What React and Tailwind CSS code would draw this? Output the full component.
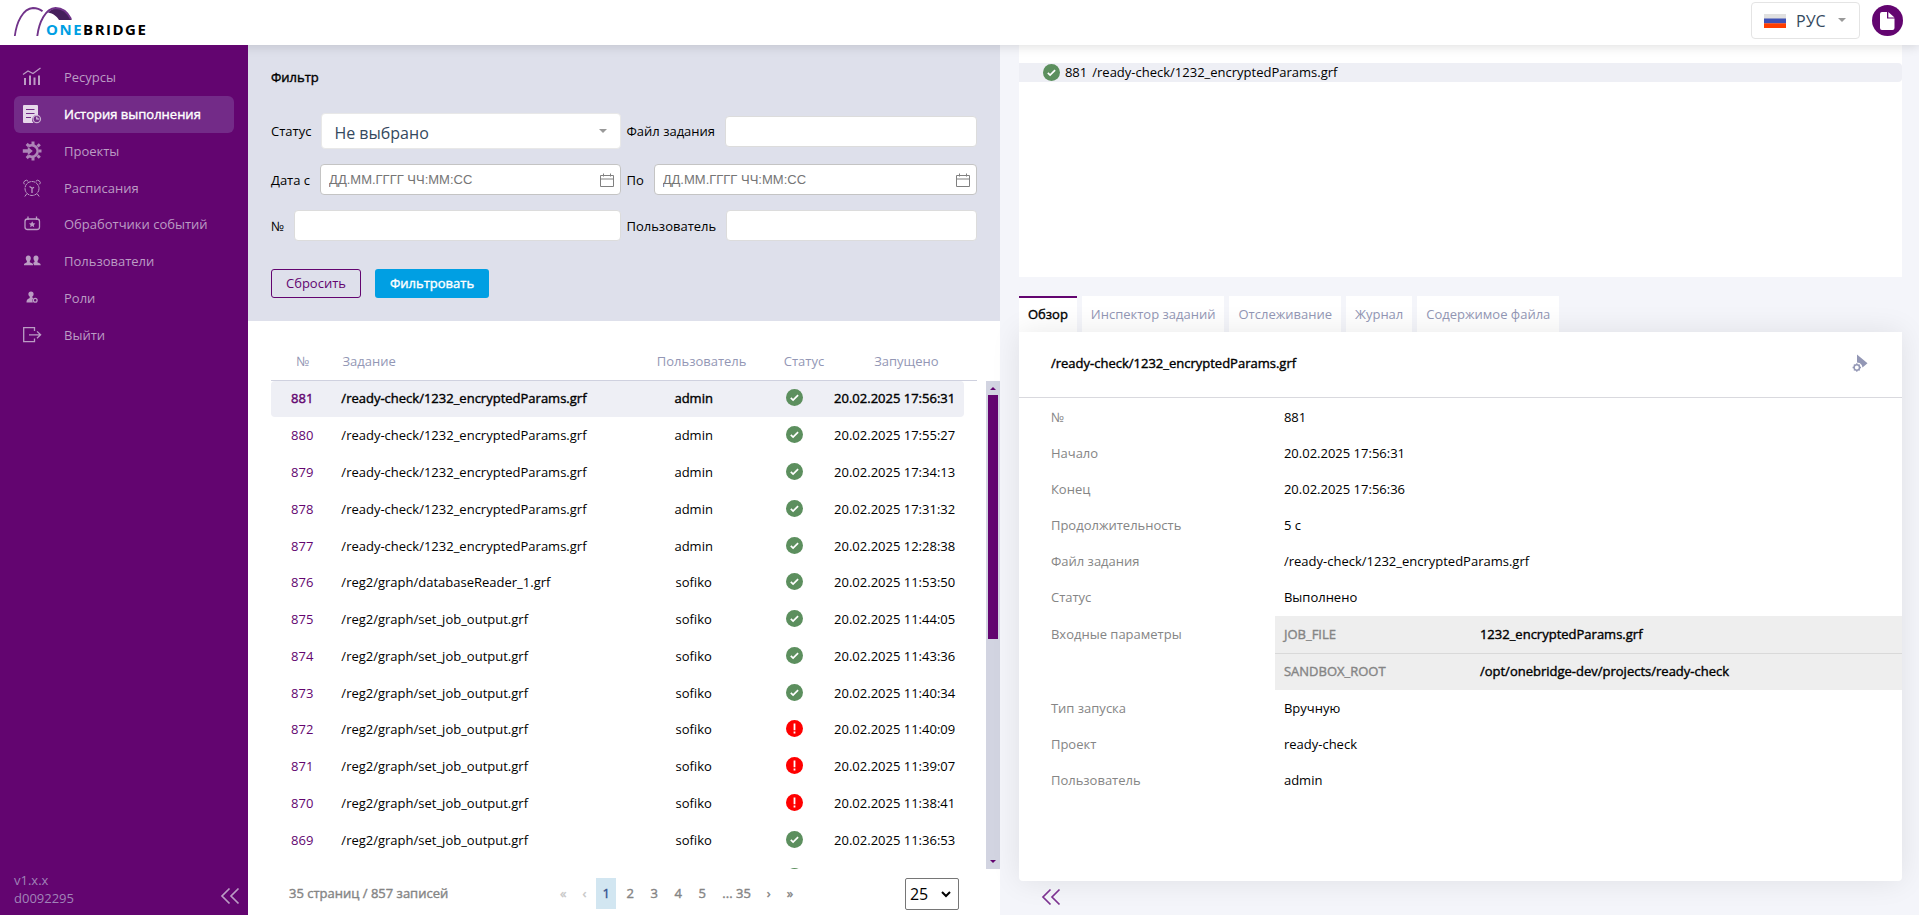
import React, { useState } from 'react';

const NAV_ITEMS = [
    { label: 'Ресурсы', icon: ResourcesIcon },
    { label: 'История выполнения', icon: HistoryIcon },
    { label: 'Проекты', icon: ProjectsIcon },
    { label: 'Расписания', icon: ScheduleIcon },
    { label: 'Обработчики событий', icon: EventsIcon },
    { label: 'Пользователи', icon: UsersIcon },
    { label: 'Роли', icon: RolesIcon },
    { label: 'Выйти', icon: LogoutIcon },
];

const RUNS = [
    { id: 881, job: '/ready-check/1232_encryptedParams.grf', user: 'admin', ok: true, started: '20.02.2025 17:56:31' },
    { id: 880, job: '/ready-check/1232_encryptedParams.grf', user: 'admin', ok: true, started: '20.02.2025 17:55:27' },
    { id: 879, job: '/ready-check/1232_encryptedParams.grf', user: 'admin', ok: true, started: '20.02.2025 17:34:13' },
    { id: 878, job: '/ready-check/1232_encryptedParams.grf', user: 'admin', ok: true, started: '20.02.2025 17:31:32' },
    { id: 877, job: '/ready-check/1232_encryptedParams.grf', user: 'admin', ok: true, started: '20.02.2025 12:28:38' },
    { id: 876, job: '/reg2/graph/databaseReader_1.grf', user: 'sofiko', ok: true, started: '20.02.2025 11:53:50' },
    { id: 875, job: '/reg2/graph/set_job_output.grf', user: 'sofiko', ok: true, started: '20.02.2025 11:44:05' },
    { id: 874, job: '/reg2/graph/set_job_output.grf', user: 'sofiko', ok: true, started: '20.02.2025 11:43:36' },
    { id: 873, job: '/reg2/graph/set_job_output.grf', user: 'sofiko', ok: true, started: '20.02.2025 11:40:34' },
    { id: 872, job: '/reg2/graph/set_job_output.grf', user: 'sofiko', ok: false, started: '20.02.2025 11:40:09' },
    { id: 871, job: '/reg2/graph/set_job_output.grf', user: 'sofiko', ok: false, started: '20.02.2025 11:39:07' },
    { id: 870, job: '/reg2/graph/set_job_output.grf', user: 'sofiko', ok: false, started: '20.02.2025 11:38:41' },
    { id: 869, job: '/reg2/graph/set_job_output.grf', user: 'sofiko', ok: true, started: '20.02.2025 11:36:53' },
    { id: null, job: '', user: '', ok: true, started: '' },
];

const TABS = ['Обзор', 'Инспектор заданий', 'Отслеживание', 'Журнал', 'Содержимое файла'];

const DETAILS_TOP = [
    ['№', '881'],
    ['Начало', '20.02.2025 17:56:31'],
    ['Конец', '20.02.2025 17:56:36'],
    ['Продолжительность', '5 с'],
    ['Файл задания', '/ready-check/1232_encryptedParams.grf'],
    ['Статус', 'Выполнено'],
];

const PARAMS = [
    ['JOB_FILE', '1232_encryptedParams.grf'],
    ['SANDBOX_ROOT', '/opt/onebridge-dev/projects/ready-check'],
];

const DETAILS_BOTTOM = [
    ['Тип запуска', 'Вручную'],
    ['Проект', 'ready-check'],
    ['Пользователь', 'admin'],
];

// Heavier look without changing the text metrics
const STRONG = '[-webkit-text-stroke:0.03em]';

function ResourcesIcon() {
    return (
        <svg width="20" height="20" viewBox="0 0 20 20" fill="currentColor">
            <path d="M1 7.5 6 4l5 2.6L18.5 1" fill="none" stroke="currentColor" strokeWidth="1.2" />
            <path d="M2 11h2v7H2zM7 8.500h2v9.500H7zM11.500 10.500h2V18h-2zM16 8.500h2v9.500h-2z" />
        </svg>
    );
}

function HistoryIcon() {
    return (
        <svg width="20" height="20" viewBox="0 0 20 20">
            <path d="M1 2a1 1 0 0 1 1-1h13a1 1 0 0 1 1 1v9.500a4.500 4.500 0 0 0-4.500 7.500H2a1 1 0 0 1-1-1z" fill="#e6d8ea" />
            <path d="M4 5.500h8.500M4 9.500h8.500M4 13.500h5" stroke="#732b88" strokeWidth="1.100" />
            <circle cx="14.800" cy="15" r="3.700" fill="none" stroke="#c9aed1" strokeWidth="1.200" />
            <path d="M14.800 12.800V15h2.400" fill="none" stroke="#e6d8ea" strokeWidth="1.100" />
        </svg>
    );
}

function ProjectsIcon() {
    return (
        <svg width="20" height="20" viewBox="0 0 20 20" opacity="0.85">
            <path d="M6.500 5.400A5.700 5.700 0 1 1 6.500 14.600" fill="none" stroke="currentColor" strokeWidth="2.600" />
            <path
                d="M11 .5v4M11 15.500v4M15.500 5.500l2.300-2.300M15.500 14.500l2.300 2.300M16.500 10H19.500M7 5.200 4.700 2.900M7 14.800l-2.300 2.300"
                stroke="currentColor"
                strokeWidth="3"
            />
            <path d="M.8 8.300h5V5.800l5 4.200-5 4.200v-2.500h-5z" fill="currentColor" />
        </svg>
    );
}

function ScheduleIcon() {
    return (
        <svg width="20" height="20" viewBox="0 0 20 20" fill="none" stroke="currentColor" strokeWidth="1">
            <circle cx="10" cy="10.500" r="7" strokeDasharray="4 .6" />
            <path d="M2.300 6.300A2.400 2.400 0 1 1 6.200 3.300M17.700 6.300A2.400 2.400 0 1 0 13.800 3.300M4.800 15.800 2.800 18.500M15.200 15.800l2 2.700" />
            <path d="M7.500 8.500 10 10v5M10 10.500l2-1.200" strokeWidth="1.300" />
        </svg>
    );
}

function EventsIcon() {
    return (
        <svg width="20" height="20" viewBox="0 0 20 20" fill="none" stroke="currentColor" strokeWidth="1.300">
            <rect x="3" y="5" width="14.500" height="10.500" rx="2.500" />
            <path d="M6 2.500V6M14.500 2.500V6" />
            <path d="m10.200 7.200 1 2 2.200.3-1.600 1.500.4 2.200-2-1.100-2 1.100.4-2.200L7 9.500l2.200-.3z" fill="currentColor" stroke="none" />
        </svg>
    );
}

function UsersIcon() {
    return (
        <svg width="20" height="20" viewBox="0 0 20 20" fill="currentColor">
            <path d="M6.300 4.500c1.900 0 2.700 1.400 2.500 3.200-.1 1-.6 1.700-1 2.200v1.300l2.700 1.300c.5.300.6.900.6 1.700H2c0-1.200.1-1.500.7-1.800l2.200-1.200V9.900c-.5-.5-1-1.200-1.100-2.200-.2-1.800.6-3.200 2.500-3.200z" />
            <path d="M14 4.500c1.900 0 2.700 1.400 2.500 3.200-.1 1-.6 1.700-1 2.200v1.300l2.500 1.200c.5.300.7.900.7 1.800h-6.800c0-1.200-.2-1.800-.9-2.300l1.500-.8V9.900c-.5-.5-.9-1.200-1-2.200-.2-1.800.6-3.200 2.500-3.200z" />
        </svg>
    );
}

function RolesIcon() {
    return (
        <svg width="20" height="20" viewBox="0 0 20 20" fill="currentColor">
            <circle cx="9" cy="6" r="2.600" />
            <path d="M7.700 7h2.600v2.500l1 .6a3.600 3.600 0 0 0-.4 4.400H4.500c0-2 .2-3.500 3.200-4.600z" />
            <circle cx="13.200" cy="12.200" r="1.900" fill="none" stroke="currentColor" strokeWidth="1.300" />
        </svg>
    );
}

function LogoutIcon() {
    return (
        <svg width="20" height="20" viewBox="0 0 20 20" fill="none" stroke="currentColor" strokeWidth="1.300">
            <path d="M12.500 6V2.700H1.700v14h10.800v-3.300" />
            <path d="M7 9.800h11.300M15 6.400l3.600 3.400-3.600 3.400" />
        </svg>
    );
}

function ChevronsIcon() {
    return (
        <svg width="20" height="18" viewBox="0 0 20 18" fill="none" stroke="currentColor" strokeWidth="1.700">
            <path d="M9.500 1.500 2 9l7.500 7.500M18.500 1.500 11 9l7.500 7.500" />
        </svg>
    );
}

function StatusIcon({ ok }) {
    return (
        <svg width="17" height="17" viewBox="0 0 17 17" className="shrink-0" role="img" aria-label={ok ? 'Выполнено' : 'Ошибка'}>
            <circle cx="8.500" cy="8.500" r="8.500" fill={ok ? '#5c8f5e' : '#ff0000'} />
            {ok ? (
                <path d="m4.800 8.800 2.300 2.300 5-5" fill="none" stroke="#fff" strokeWidth="1.700" />
            ) : (
                <path d="M8.500 3.400v6.800M8.500 11.600v2" stroke="#fff" strokeWidth="1.800" />
            )}
        </svg>
    );
}

function CalendarIcon() {
    return (
        <svg width="14" height="14" viewBox="0 0 14 14" fill="none" stroke="#808080">
            <path d="M.5 2.500h13v11H.5zM.5 6h13M3.500.5v3M10.500.5v3" />
        </svg>
    );
}

function Caret({ className }) {
    return (
        <svg width="8" height="4" viewBox="0 0 8 4" className={className}>
            <path d="M0 0h8L4 4z" fill="#999" />
        </svg>
    );
}

function Header() {
    return (
        <header className="relative z-10 flex h-[45px] shrink-0 items-center justify-between bg-white pr-4 shadow-[0_2px_10px_rgba(0,0,0,0.12)]">
            <a href="#home" aria-label="Onebridge" className="relative block h-full w-[160px]">
                <svg width="80" height="40" viewBox="0 0 80 40" fill="none" className="absolute top-0 left-0">
                    <path d="M48 12.500C51 9.500 54 8 57 8c7 0 12 5.500 14.800 12H59c-2.500-4-5.500-6.500-11-7.500z" fill="#46205c" />
                    <path d="M14.800 36C16.500 22 23 8.500 33 8c4 0 7 1.200 9.500 3.300" stroke="#71338a" strokeWidth="1.800" />
                    <path d="M37.300 36C39 22 45.500 8.500 55.500 8c6.500 0 12 4 15.500 11" stroke="#71338a" strokeWidth="1.900" />
                </svg>
                <span className="absolute top-[18px] left-[46px] text-[15px] leading-[22px] font-bold tracking-widest">
                    <span className="text-[#009fe3]">ONE</span>
                    <span className="text-black">BRIDGE</span>
                </span>
            </a>
            <div className="flex items-center gap-3">
                <div className="relative mb-1 flex items-center">
                    <svg width="22" height="14" viewBox="0 0 22 14" className="pointer-events-none absolute left-[13px]">
                        <path d="M0 0h22v5H0z" fill="#e0e0e0" />
                        <path d="M0 4.500h22v5H0z" fill="#3f51b5" />
                        <path d="M0 9.300h22V14H0z" fill="#ff3d00" />
                    </svg>
                    <select
                        aria-label="Язык"
                        className="h-[37px] w-[109px] appearance-none rounded border border-[#e4e4e4] bg-white pt-px pl-11 text-base text-[#34495e]"
                    >
                        <option>РУС</option>
                    </select>
                    <Caret className="pointer-events-none absolute right-[14px] mb-[2px]" />
                </div>
                <button type="button" aria-label="Документ" className="mb-1 flex size-[31px] items-center justify-center rounded-full bg-[#630570]">
                    <svg width="15" height="18" viewBox="0 0 15 18">
                        <path d="M2 0h5v6.500h7.500V16a2 2 0 0 1-2 2H2a2 2 0 0 1-2-2V2a2 2 0 0 1 2-2z" fill="#fff" />
                        <path d="M8.300 0 14.500 5.400H8.300z" fill="#fff" />
                    </svg>
                </button>
            </div>
        </header>
    );
}

function Sidebar() {
    const active = 'История выполнения';

    return (
        <aside className="relative z-20 flex w-[248px] shrink-0 flex-col justify-between bg-[#630570] pt-[14px] leading-[18px]">
            <nav className="grid h-[294px] auto-rows-fr px-[14px]">
                {NAV_ITEMS.map(({ label, icon: Icon }) => (
                    <a
                        key={label}
                        href="#nav"
                        className={`flex items-center gap-[22px] rounded-md pl-2 ${label === active ? 'bg-[#732b88] text-white' : 'text-[#bb9cc4]'
                            }`}
                    >
                        <Icon />
                        <span className={label === active ? STRONG : ''}>{label}</span>
                    </a>
                ))}
            </nav>
            <div className="flex items-end justify-between pr-2 pb-2 pl-[14px] text-[#a084b8]">
                <div>
                    <div>v1.x.x</div>
                    <div>d0092295</div>
                </div>
                <button type="button" aria-label="Свернуть меню" className="pb-[2px] text-[#bb9cc4]">
                    <ChevronsIcon />
                </button>
            </div>
        </aside>
    );
}

function TextField({ id, label }) {
    return (
        <div className="flex items-center gap-[10px]">
            <label htmlFor={id}>{label}</label>
            <input id={id} type="text" className="h-[31px] min-w-0 flex-1 rounded border border-[#dcdcdc] bg-white px-2" />
        </div>
    );
}

function DateField({ id, label }) {
    return (
        <div className="flex items-center gap-[10px]">
            <label htmlFor={id}>{label}</label>
            <div className="relative flex min-w-0 flex-1 items-center">
                <input
                    id={id}
                    type="text"
                    placeholder="ДД.ММ.ГГГГ ЧЧ:ММ:СС"
                    className="h-[31px] w-full rounded border border-[#c4c4c4] bg-white px-2 font-['Liberation_Sans',sans-serif] text-[13px] placeholder:text-[#757575]"
                />
                <span className="pointer-events-none absolute right-[7px]">
                    <CalendarIcon />
                </span>
            </div>
        </div>
    );
}

function Filter() {
    return (
        <form className="bg-[#dee0eb] px-[23px] pt-[23px] pb-[23px]">
            <h2 className={`leading-[18px] ${STRONG}`}>Фильтр</h2>
            <div className="mt-[27px] grid grid-cols-2 gap-x-[5px] gap-y-[15px] leading-[18px]">
                <div className="flex items-center gap-[10px]">
                    <label htmlFor="status">Статус</label>
                    <div className="relative flex min-w-0 flex-1 items-center">
                        <select
                            id="status"
                            className="h-9 w-full appearance-none rounded border border-[#e8e8e8] bg-white px-3 pt-1 text-base text-[#34495e]"
                        >
                            <option>Не выбрано</option>
                        </select>
                        <Caret className="pointer-events-none absolute right-[14px]" />
                    </div>
                </div>
                <TextField id="file" label="Файл задания" />
                <DateField id="from" label="Дата с" />
                <DateField id="to" label="По" />
                <TextField id="number" label="№" />
                <TextField id="user" label="Пользователь" />
            </div>
            <div className="mt-7 flex gap-[14px]">
                <button type="button" className="h-[29px] rounded-[3px] border border-[#630570] px-[14px] text-[#630570]">
                    Сбросить
                </button>
                <button type="button" className={`h-[29px] rounded-[3px] bg-[#009fe3] px-[15px] text-white ${STRONG}`}>
                    Фильтровать
                </button>
            </div>
        </form>
    );
}

function RunColumns() {
    return (
        <colgroup>
            <col className="w-[9%]" />
            <col className="w-[42%]" />
            <col className="w-[20%]" />
            <col className="w-[9%]" />
            <col className="w-[20%]" />
        </colgroup>
    );
}

function Runs() {
    const [selected, setSelected] = useState(881);

    return (
        <>
            <div className="px-[23px] pt-[23px]">
                <table className="w-full table-fixed border-b border-[#cfd1df] text-[#9397b5]">
                    <RunColumns />
                    <thead>
                        <tr className="h-9">
                            <th className="font-normal">№</th>
                            <th className="pl-2 text-left font-normal">Задание</th>
                            <th className="font-normal">Пользователь</th>
                            <th className="font-normal">Статус</th>
                            <th className="font-normal">Запущено</th>
                        </tr>
                    </thead>
                </table>
            </div>
            <div className="flex min-h-0 flex-1 pl-[23px]">
                <div className="mr-[22px] flex-1 overflow-hidden">
                    <table className="h-[515px] w-full table-fixed">
                        <RunColumns />
                        <tbody>
                            {RUNS.map((run) => (
                                <tr
                                    key={run.id}
                                    onClick={() => setSelected(run.id)}
                                    className={run.id === selected ? `bg-[#eeeff5] ${STRONG}` : ''}
                                >
                                    <td className="rounded-l text-center">
                                        <a href="#run" className="text-[#630570]">{run.id}</a>
                                    </td>
                                    <td className="pl-2">{run.job}</td>
                                    <td className="text-center">{run.user}</td>
                                    <td>
                                        <div className="flex justify-center pb-[2px]">
                                            <StatusIcon ok={run.ok} />
                                        </div>
                                    </td>
                                    <td className="rounded-r text-center whitespace-nowrap">{run.started}</td>
                                </tr>
                            ))}
                        </tbody>
                    </table>
                </div>
                <div className="flex w-[14px] flex-col items-center bg-[#d2d4e1]">
                    <svg width="14" height="14" viewBox="0 0 14 14">
                        <path d="M4 9h6L7 6z" fill="#630570" />
                    </svg>
                    <div className="w-[10px] flex-1">
                        <div className="h-[53%] bg-[#630570]" />
                    </div>
                    <svg width="14" height="14" viewBox="0 0 14 14">
                        <path d="M4 5h6L7 8z" fill="#630570" />
                    </svg>
                </div>
            </div>
        </>
    );
}

function Pager() {
    const pages = ['1', '2', '3', '4', '5'];

    return (
        <div className="flex h-[46px] shrink-0 items-start justify-between px-[41px] pt-[9px] leading-[31px] text-[#858585]">
            <span className={STRONG}>35 страниц / 857 записей</span>
            <div className={`flex ${STRONG}`}>
                <button type="button" className="px-2 text-[#c8c8c8]">«</button>
                <button type="button" className="px-2 text-[#c8c8c8]">‹</button>
                {pages.map((page) => (
                    <button
                        key={page}
                        type="button"
                        className={page === '1' ? 'mx-[2px] w-5 bg-[#d2e6f1] text-[#34538f]' : 'w-6'}
                    >
                        {page}
                    </button>
                ))}
                <button type="button" className="px-2">... 35</button>
                <button type="button" className="px-2">›</button>
                <button type="button" className="px-2">»</button>
            </div>
            <div className="relative flex items-center">
                <select
                    aria-label="Записей на странице"
                    className="h-8 w-[54px] appearance-none rounded-[2px] border border-[#767676] bg-white pl-1 text-base text-black"
                >
                    <option>25</option>
                </select>
                <svg width="10" height="7" viewBox="0 0 10 7" className="pointer-events-none absolute right-2">
                    <path d="m1 1 4 4 4-4" fill="none" stroke="#000" strokeWidth="2" />
                </svg>
            </div>
        </div>
    );
}

function DetailRow({ label, value }) {
    return (
        <div className="flex h-9 items-center leading-9">
            <dt className="w-[233px] shrink-0 text-[#858585]">{label}</dt>
            <dd>{value}</dd>
        </div>
    );
}

function Details() {
    const [tab, setTab] = useState('Обзор');

    return (
        <section className="flex flex-1 flex-col pr-[17px] pl-[19px]">
            <div className="h-[232px] shrink-0 bg-white pt-[18px]">
                <div className="flex h-[19px] items-center rounded-r bg-[#eeeff5] pl-6">
                    <StatusIcon ok />
                    <span className="ml-[5px]">881</span>
                    <span className="ml-[5px]">/ready-check/1232_encryptedParams.grf</span>
                </div>
            </div>
            <div className="mt-[19px] flex gap-[5px]" role="tablist">
                {TABS.map((name) => (
                    <button
                        key={name}
                        type="button"
                        role="tab"
                        aria-selected={name === tab}
                        onClick={() => setTab(name)}
                        className={`h-9 border-t-2 bg-white px-[9px] pb-[2px] ${name === tab ? `border-[#630570] text-black ${STRONG}` : 'border-white text-[#9397b5]'
                            }`}
                    >
                        {name}
                    </button>
                ))}
            </div>
            <div className="relative flex-1 rounded-b bg-white shadow-[0_0_30px_rgba(0,0,0,0.09)]">
                <div className="flex h-[66px] items-center justify-between border-b border-[#d9d9de] pr-[34px] pb-[2px] pl-8">
                    <h3 className={STRONG}>/ready-check/1232_encryptedParams.grf</h3>
                    <button type="button" aria-label="Запустить">
                        <svg width="16" height="19" viewBox="0 0 16 19" fill="#9397b5">
                            <path d="M5 .5 15.500 9.200l-5 4.200-.8-2.400-2-2L5 8.600z" />
                            <circle cx="4.800" cy="13.500" r="2.700" fill="none" stroke="#9397b5" strokeWidth="1.500" />
                            <path
                                d="M4.800 9.300v1.400M4.800 16.300v1.400M.6 13.500H2M7.600 13.500H9M1.900 10.600l1 1M6.700 15.400l1 1M7.700 10.600l-1 1M2.900 15.400l-1 1"
                                stroke="#9397b5"
                                strokeWidth="1.300"
                            />
                        </svg>
                    </button>
                </div>
                <dl className="pt-px pl-8">
                    {DETAILS_TOP.map(([label, value]) => (
                        <DetailRow key={label} label={label} value={value} />
                    ))}
                    <div className="mt-px flex">
                        <dt className="w-[224px] shrink-0 leading-9 text-[#858585]">Входные параметры</dt>
                        <dd className="flex-1">
                            <table className="w-full table-fixed bg-[#eeeeee]">
                                <tbody>
                                    {PARAMS.map(([name, value], index) => (
                                        <tr key={name} className={`h-[37px] ${STRONG} ${index > 0 ? 'border-t border-[#d9d9d9]' : ''}`}>
                                            <th scope="row" className="w-[205px] pl-[9px] text-left font-normal text-[#858585]">
                                                {name}
                                            </th>
                                            <td>{value}</td>
                                        </tr>
                                    ))}
                                </tbody>
                            </table>
                        </dd>
                    </div>
                    {DETAILS_BOTTOM.map(([label, value]) => (
                        <DetailRow key={label} label={label} value={value} />
                    ))}
                </dl>
            </div>
            <div className="relative flex h-[34px] shrink-0 items-center pb-[2px] pl-[22px]">
                <button type="button" aria-label="Свернуть панель" className="text-[#7c3290]">
                    <ChevronsIcon />
                </button>
            </div>
        </section>
    );
}

function App() {
    return (
        <div className="flex h-screen flex-col overflow-hidden bg-[#f4f5fa] font-['Open_Sans',sans-serif] text-[13px] leading-[17px] text-black">
            <Header />
            <div className="flex min-h-0 flex-1">
                <Sidebar />
                <main className="flex min-w-0 flex-1">
                    <section className="flex w-[45%] shrink-0 flex-col bg-white">
                        <Filter />
                        <Runs />
                        <Pager />
                    </section>
                    <Details />
                </main>
            </div>
        </div>
    );
}

export default App
